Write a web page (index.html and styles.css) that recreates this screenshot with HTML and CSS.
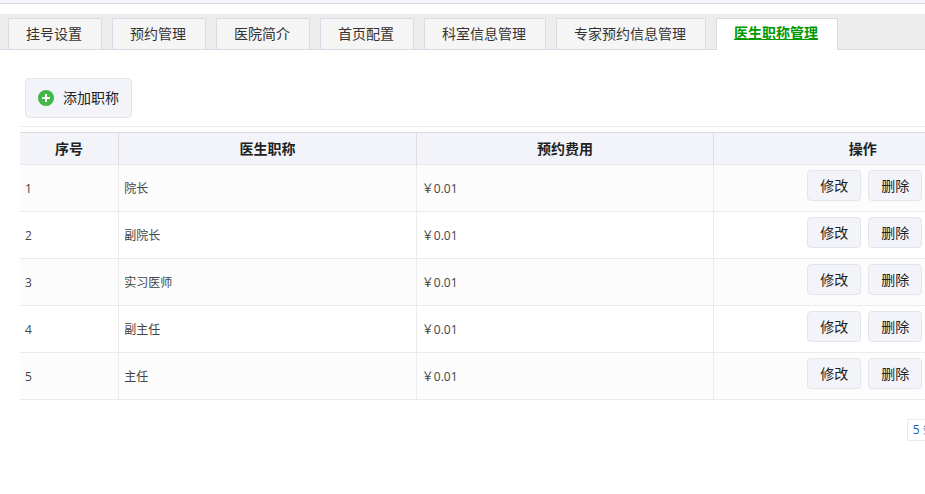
FILE: index.html
```html
<!DOCTYPE html>
<html lang="zh-CN">

<head>
    <meta charset="UTF-8">
    <meta name="viewport" content="width=device-width, initial-scale=1.0">
    <title>医生职称管理</title>
    <link rel="stylesheet" href="styles.css">
</head>

<body>

    <div class="topbar"></div>

    <nav class="tabs">
        <a href="#">挂号设置</a>
        <a href="#">预约管理</a>
        <a href="#">医院简介</a>
        <a href="#">首页配置</a>
        <a href="#">科室信息管理</a>
        <a href="#">专家预约信息管理</a>
        <a href="#" class="active">医生职称管理</a>
    </nav>

    <div class="content">
        <div class="toolbar">
            <button type="button" class="btn btn-add">
                <svg width="16" height="16" viewBox="0 0 16 16">
                    <circle cx="8" cy="8" r="8" fill="#43b649" />
                    <path d="M8 4v8M4 8h8" stroke="#fff" stroke-width="2" />
                </svg>
                添加职称
            </button>
        </div>

        <table class="list">
            <thead>
                <tr>
                    <th class="col-no">序号</th>
                    <th>医生职称</th>
                    <th>预约费用</th>
                    <th>操作</th>
                </tr>
            </thead>
            <tbody>
                <tr>
                    <td>1</td>
                    <td>院长</td>
                    <td>￥0.01</td>
                    <td>
                        <div class="actions">
                            <button type="button" class="btn">修改</button>
                            <button type="button" class="btn">删除</button>
                        </div>
                    </td>
                </tr>
                <tr>
                    <td>2</td>
                    <td>副院长</td>
                    <td>￥0.01</td>
                    <td>
                        <div class="actions">
                            <button type="button" class="btn">修改</button>
                            <button type="button" class="btn">删除</button>
                        </div>
                    </td>
                </tr>
                <tr>
                    <td>3</td>
                    <td>实习医师</td>
                    <td>￥0.01</td>
                    <td>
                        <div class="actions">
                            <button type="button" class="btn">修改</button>
                            <button type="button" class="btn">删除</button>
                        </div>
                    </td>
                </tr>
                <tr>
                    <td>4</td>
                    <td>副主任</td>
                    <td>￥0.01</td>
                    <td>
                        <div class="actions">
                            <button type="button" class="btn">修改</button>
                            <button type="button" class="btn">删除</button>
                        </div>
                    </td>
                </tr>
                <tr>
                    <td>5</td>
                    <td>主任</td>
                    <td>￥0.01</td>
                    <td>
                        <div class="actions">
                            <button type="button" class="btn">修改</button>
                            <button type="button" class="btn">删除</button>
                        </div>
                    </td>
                </tr>
            </tbody>
        </table>

        <div class="pager">
            <span>5 条记录 1/1 页</span>
        </div>
    </div>

</body>

</html>
```

FILE: styles.css
```css
* {
    box-sizing: border-box;
}

body {
    margin: 0;
    background-color: #fff;
    color: #444;
    font-family: "Open Sans", "Noto Sans CJK SC", sans-serif;
    font-size: 12px;
    overflow-x: hidden;
}

.topbar {
    height: 4px;
    margin-bottom: 10px;
    background-color: #f2f4f9;
    border-bottom: 1px solid #d6dbe6;
}

/* tabs */

.tabs {
    display: flex;
    gap: 10px;
    padding: 4px 8px 0;
    background-color: #ededed;
    border-bottom: 1px solid #d6dbe6;
}

.tabs a {
    height: 31px;
    padding: 0 17px;
    border: 1px solid #d6dbe6;
    border-bottom: 0;
    background-color: #f5f5f5;
    color: #333;
    font-size: 14px;
    line-height: 30px;
    text-align: center;
    text-decoration: none;
    white-space: nowrap;
    padding-right: 19px;
}

.tabs .active {
    height: 32px;
    margin-bottom: -1px;
    background-color: #fff;
    color: #090;
    font-weight: bold;
    line-height: 28px;
    text-decoration: underline;
}

/* content is wider than a narrow window, the rest is cut off */

.content {
    min-width: 1012px;
    padding-left: 20px;
}

.toolbar {
    margin-bottom: 5px;
    padding: 28px 5px 8px;
    border-bottom: 1px solid #ededed;
}

.btn {
    height: 31px;
    padding: 0 12px;
    border: 1px solid #e3e5eb;
    border-radius: 4px;
    background-color: #f2f4f9;
    color: #222;
    font-family: inherit;
    font-size: 14px;
    line-height: 28px;
    cursor: pointer;
}

.btn-add {
    display: flex;
    align-items: center;
    gap: 9px;
    height: 40px;
}

.list {
    width: 100%;
    border-top: 1px solid #ddd;
    border-collapse: separate;
    border-spacing: 0;
    table-layout: fixed;
}

.list th {
    height: 32px;
    padding: 0 0 2px;
    border-right: 1px solid #ddd;
    border-bottom: 1px solid #e3e8f0;
    background-color: #f2f4f9;
    color: #222;
    font-size: 14px;
}

.list .col-no {
    width: 10%;
}

.list td {
    height: 47px;
    padding: 5px;
    border-right: 1px solid #ebebeb;
    border-bottom: 1px solid #ebebeb;
}

.list tbody tr:nth-child(odd) {
    background-color: #fcfcfc;
}

.actions {
    display: flex;
    justify-content: center;
    gap: 7px;
    padding: 0 0 5px 4px;
}

.pager {
    display: flex;
    justify-content: flex-end;
    margin-top: 19px;
    padding-right: 11px;
}

.pager span {
    height: 22px;
    padding: 0 5px;
    border: 1px solid #ebebeb;
    color: #0b63b5;
    line-height: 20px;
}
```
